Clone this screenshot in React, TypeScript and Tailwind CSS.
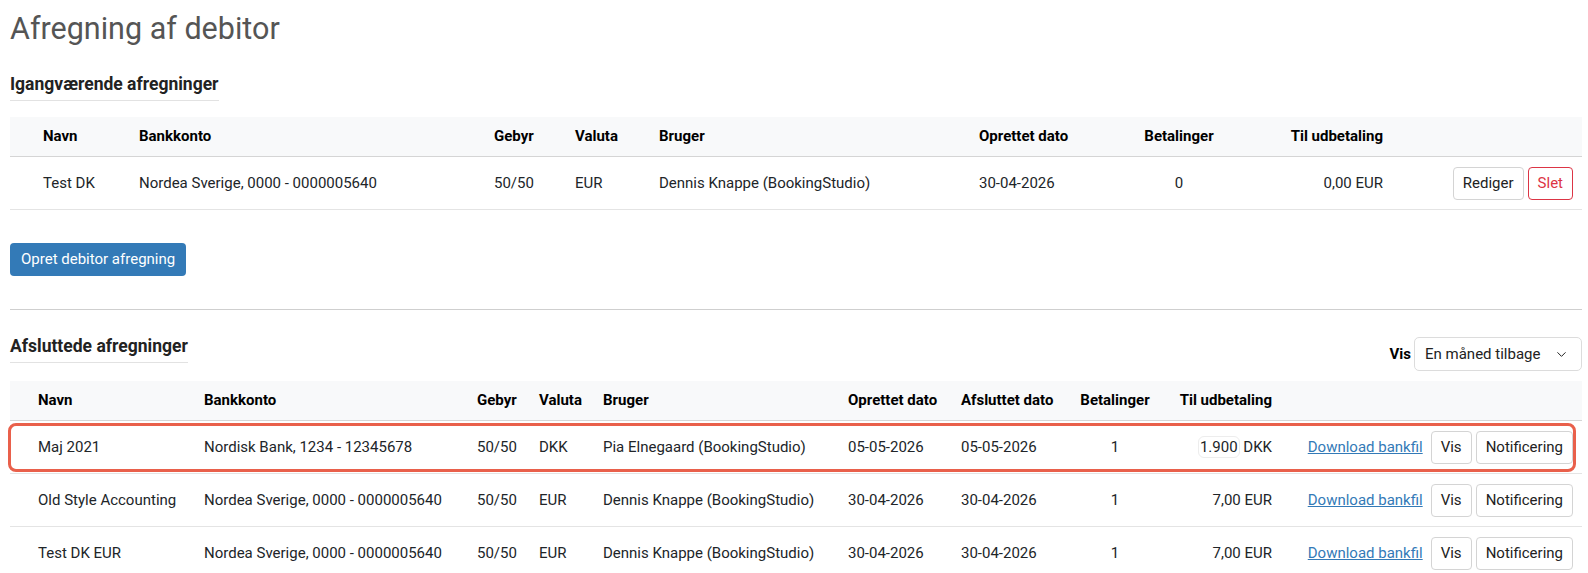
import { ChevronDown } from "lucide-react";

interface OpenSettlement {
  name: string;
  account: string;
  fee: string;
  currency: string;
  user: string;
  created: string;
  payments: number;
  payout: string;
}

interface ClosedSettlement extends OpenSettlement {
  closed: string;
  payoutAmount: string;
  highlight?: boolean;
}

const openRows: OpenSettlement[] = [
  {
    name: "Test DK",
    account: "Nordea Sverige, 0000 - 0000005640",
    fee: "50/50",
    currency: "EUR",
    user: "Dennis Knappe (BookingStudio)",
    created: "30-04-2026",
    payments: 0,
    payout: "0,00 EUR",
  },
];

const closedRows: ClosedSettlement[] = [
  {
    name: "Maj 2021",
    account: "Nordisk Bank, 1234 - 12345678",
    fee: "50/50",
    currency: "DKK",
    user: "Pia Elnegaard (BookingStudio)",
    created: "05-05-2026",
    closed: "05-05-2026",
    payments: 1,
    payoutAmount: "1.900",
    payout: "DKK",
    highlight: true,
  },
  {
    name: "Old Style Accounting",
    account: "Nordea Sverige, 0000 - 0000005640",
    fee: "50/50",
    currency: "EUR",
    user: "Dennis Knappe (BookingStudio)",
    created: "30-04-2026",
    closed: "30-04-2026",
    payments: 1,
    payoutAmount: "7,00",
    payout: "EUR",
  },
  {
    name: "Test DK EUR",
    account: "Nordea Sverige, 0000 - 0000005640",
    fee: "50/50",
    currency: "EUR",
    user: "Dennis Knappe (BookingStudio)",
    created: "30-04-2026",
    closed: "30-04-2026",
    payments: 1,
    payoutAmount: "7,00",
    payout: "EUR",
  },
];

const openCols =
  "grid grid-cols-[96px_355px_81px_84px_320px_141px_118px_145px_1fr] pl-[33px] pr-[9px]";
const closedCols =
  "grid grid-cols-[166px_273px_62px_64px_245px_113px_109px_90px_112px_1fr] pl-[28px] pr-[9px]";

function SectionHeading({ children }: { children: string }) {
  return (
    <h2 className="inline-block border-b border-[#e2e2e2] pb-[5px] text-[17.5px] font-bold leading-[22px] text-[#222]">
      {children}
    </h2>
  );
}

function OutlineButton({ children, danger }: { children: string; danger?: boolean }) {
  return (
    <button
      className={`h-[33px] rounded-[4px] border bg-white px-[9px] text-[15px] ${
        danger ? "border-[#dc3545] text-[#dc3545]" : "border-[#d4d4d4] text-[#222]"
      }`}
    >
      {children}
    </button>
  );
}

export default function App() {
  return (
    <div
      className="ml-[10px] mr-[6px] pt-[11px] text-[15px] text-[#212529]"
      style={{ fontFamily: "Roboto, 'Liberation Sans', sans-serif" }}
    >
      <h1 className="text-[30.5px] leading-[36px] text-[#555]">Afregning af debitor</h1>

      <div className="mt-[26px]">
        <SectionHeading>Igangværende afregninger</SectionHeading>
      </div>

      {/* running settlements */}
      <div className="mt-[16px]">
        <div className={`${openCols} h-[40px] items-center border-b border-[#d5d5d5] bg-[#f8f9fa] font-bold text-black`}>
          <div>Navn</div>
          <div>Bankkonto</div>
          <div>Gebyr</div>
          <div>Valuta</div>
          <div>Bruger</div>
          <div>Oprettet dato</div>
          <div className="text-center">Betalinger</div>
          <div className="text-right">Til udbetaling</div>
          <div />
        </div>
        {openRows.map((r) => (
          <div key={r.name} className={`${openCols} h-[53px] items-center border-b border-[#e4e4e4]`}>
            <div>{r.name}</div>
            <div>{r.account}</div>
            <div>{r.fee}</div>
            <div>{r.currency}</div>
            <div>{r.user}</div>
            <div>{r.created}</div>
            <div className="text-center">{r.payments}</div>
            <div className="text-right">{r.payout}</div>
            <div className="flex justify-end gap-[4px]">
              <OutlineButton>Rediger</OutlineButton>
              <OutlineButton danger>Slet</OutlineButton>
            </div>
          </div>
        ))}
      </div>

      <button className="mt-[33px] h-[33px] rounded-[4px] bg-[#337ab7] px-[11px] text-[15px] text-white">
        Opret debitor afregning
      </button>

      <hr className="mt-[33px] border-t border-[#cfcfcf]" />

      <div className="flex items-start justify-between">
        <div className="mt-[25px]">
          <SectionHeading>Afsluttede afregninger</SectionHeading>
        </div>
        <div className="mt-[27px] flex items-center">
          <span className="mr-[3px] font-bold text-black">Vis</span>
          <div className="flex h-[34px] w-[168px] items-center justify-between rounded-[5px] border border-[#dcdcdc] bg-white pl-[10px] pr-[12px] text-[15px] text-[#222]">
            <span>En måned tilbage</span>
            <ChevronDown size={15} strokeWidth={1.6} />
          </div>
        </div>
      </div>

      {/* closed settlements */}
      <div className="mt-[10px]">
        <div className={`${closedCols} h-[40px] items-center border-b border-[#d5d5d5] bg-[#f8f9fa] font-bold text-black`}>
          <div>Navn</div>
          <div>Bankkonto</div>
          <div>Gebyr</div>
          <div>Valuta</div>
          <div>Bruger</div>
          <div>Oprettet dato</div>
          <div>Afsluttet dato</div>
          <div className="text-center">Betalinger</div>
          <div className="text-right">Til udbetaling</div>
          <div />
        </div>
        {closedRows.map((r) => (
          <div key={r.name} className={`${closedCols} relative h-[53px] items-center border-b border-[#e4e4e4]`}>
            {r.highlight && (
              <div className="pointer-events-none absolute bottom-[1px] left-[-2px] right-[6px] top-[2px] rounded-[8px] border-[3px] border-[#e9604b]" />
            )}
            <div>{r.name}</div>
            <div>{r.account}</div>
            <div>{r.fee}</div>
            <div>{r.currency}</div>
            <div>{r.user}</div>
            <div>{r.created}</div>
            <div>{r.closed}</div>
            <div className="text-center">{r.payments}</div>
            <div className="text-right">
              {r.highlight ? (
                <span className="rounded-[6px] border border-[#ededed] px-[1px] py-[1px]">{r.payoutAmount}</span>
              ) : (
                r.payoutAmount
              )}{" "}
              {r.payout}
            </div>
            <div className="flex items-center justify-end">
              <a href="#" className="mr-[8px] text-[#337ab7] underline">
                Download bankfil
              </a>
              <div className="flex gap-[4px]">
                <OutlineButton>Vis</OutlineButton>
                <OutlineButton>Notificering</OutlineButton>
              </div>
            </div>
          </div>
        ))}
      </div>
    </div>
  );
}
